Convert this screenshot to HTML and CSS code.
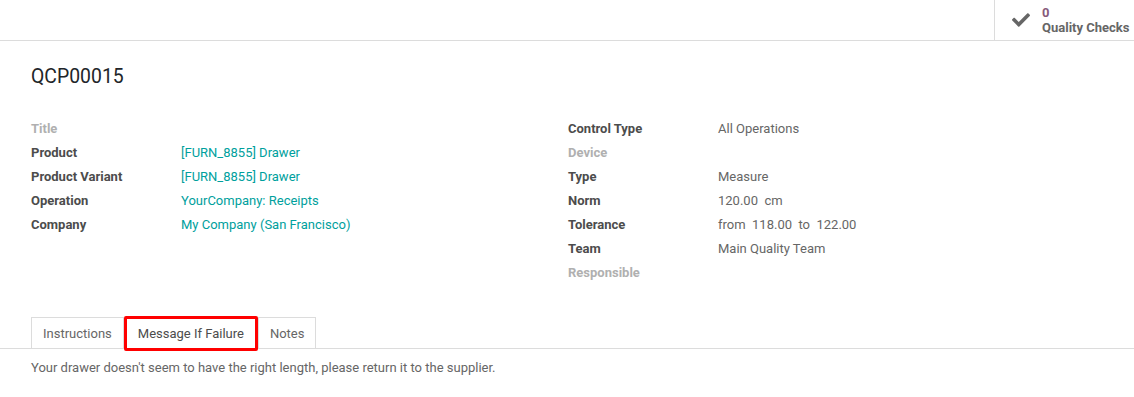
FILE: index.html
```html
<!DOCTYPE html>
<html lang="en">
<head>
    <meta charset="UTF-8">
    <title>QCP00015</title>
    <link rel="stylesheet" href="styles.css">
</head>
<body>
    <div class="topbar">
        <div class="stat-btn">
            <svg class="stat-icon" viewBox="0 0 512 512"><path d="M173.898 439.404l-166.4-166.4c-9.997-9.997-9.997-26.206 0-36.204l36.203-36.204c9.997-9.998 26.207-9.998 36.204 0L192 312.69 432.095 72.596c9.997-9.997 26.207-9.997 36.204 0l36.203 36.204c9.997 9.997 9.997 26.206 0 36.204l-294.4 294.401c-9.998 9.997-26.207 9.997-36.204-.001z"/></svg>
            <div class="stat-text">
                <span class="stat-value">0</span>
                <span class="stat-label">Quality Checks</span>
            </div>
        </div>
    </div>
    <div class="sheet">
        <h1>QCP00015</h1>
        <div class="groups">
            <div class="group">
                <div class="row"><span class="label muted">Title</span><span class="value"></span></div>
                <div class="row"><span class="label">Product</span><a class="value link" href="#">[FURN_8855] Drawer</a></div>
                <div class="row"><span class="label">Product Variant</span><a class="value link" href="#">[FURN_8855] Drawer</a></div>
                <div class="row"><span class="label">Operation</span><a class="value link" href="#">YourCompany: Receipts</a></div>
                <div class="row"><span class="label">Company</span><a class="value link" href="#">My Company (San Francisco)</a></div>
            </div>
            <div class="group">
                <div class="row"><span class="label">Control Type</span><span class="value">All Operations</span></div>
                <div class="row"><span class="label muted">Device</span><span class="value"></span></div>
                <div class="row"><span class="label">Type</span><span class="value">Measure</span></div>
                <div class="row"><span class="label">Norm</span><span class="value">120.00&nbsp; cm</span></div>
                <div class="row"><span class="label">Tolerance</span><span class="value">from &nbsp;118.00 &nbsp;to &nbsp;122.00</span></div>
                <div class="row"><span class="label">Team</span><span class="value">Main Quality Team</span></div>
                <div class="row"><span class="label muted">Responsible</span><span class="value"></span></div>
            </div>
        </div>
    </div>
    <div class="tabs">
        <a class="tab" href="#">Instructions</a>
        <a class="tab active" href="#">Message If Failure<span class="highlight"></span></a>
        <a class="tab" href="#">Notes</a>
    </div>
    <p class="tab-content">Your drawer doesn't seem to have the right length, please return it to the supplier.</p>
</body>
</html>
```

FILE: styles.css
```css
body {
    margin: 0;
    font-family: Roboto, "Noto Sans", sans-serif;
    font-size: 13px;
    color: #666;
    background: #fff;
}
.topbar {
    height: 40px;
    border-bottom: 1px solid #dcdcdc;
    display: flex;
    justify-content: flex-end;
}
.stat-btn {
    width: 140px;
    border-left: 1px solid #dcdcdc;
    display: flex;
    align-items: center;
    padding-left: 17px;
    box-sizing: border-box;
}
.stat-icon {
    width: 18px;
    height: 18px;
    fill: #666;
    margin-right: 12px;
    margin-top: -1px;
}
.stat-text {
    display: flex;
    flex-direction: column;
    font-size: 13px;
    font-weight: bold;
    line-height: 15px;
    margin-top: -1px;
}
.stat-value {
    color: #875a7b;
}
.stat-label {
    color: #666;
}
.sheet {
    padding: 0 31px;
}
h1 {
    margin: 0;
    padding-top: 22px;
    font-size: 19.4px;
    font-weight: normal;
    line-height: 28px;
    color: #212529;
}
.groups {
    display: grid;
    grid-template-columns: 537px 1fr;
    margin-top: 25px;
}
.row {
    display: flex;
    height: 24px;
    align-items: center;
}
.label {
    width: 150px;
    font-weight: bold;
    color: #4c4c4c;
}
.label.muted {
    color: #b0b0b0;
}
.value {
    color: #666;
}
.link {
    color: #00a09d;
    text-decoration: none;
}
.tabs {
    display: flex;
    margin-top: 33px;
    padding-left: 31px;
    border-bottom: 1px solid #dcdcdc;
}
.tab {
    position: relative;
    height: 29px;
    padding: 1px 11px 0;
    line-height: 30px;
    margin-bottom: -1px;
    border: 1px solid #dcdcdc;
    color: #666;
    text-decoration: none;
}
.tab.active {
    padding: 1px 13px 0;
    border-color: #fff;
    color: #4c4c4c;
}
.highlight {
    position: absolute;
    left: -1px;
    top: -2px;
    right: -1px;
    bottom: -3px;
    border: 3px solid #ff0000;
    border-radius: 2px;
}
.tab-content {
    margin: 0;
    padding: 10px 31px;
    line-height: 18px;
}
```
